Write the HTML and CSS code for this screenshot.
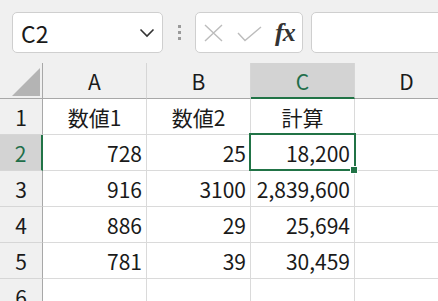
FILE: index.html
```html
<!DOCTYPE html>
<html lang="ja">

<head>
    <meta charset="UTF-8">
    <meta name="viewport" content="width=device-width, initial-scale=1.0">
    <title>計算</title>
    <link rel="stylesheet" href="styles.css">
</head>

<body>
    <div class="toolbar">
        <div class="name-box">
            <span>C2</span>
            <svg class="chevron" width="16" height="10" viewBox="0 0 16 10">
                <polyline points="1.5,1.5 8,8 14.5,1.5" fill="none" stroke="#333" stroke-width="1.6" />
            </svg>
        </div>
        <div class="grip">
            <span></span><span></span><span></span>
        </div>
        <div class="fx-box">
            <svg class="icon-cancel" width="19" height="18" viewBox="0 0 19 18">
                <path d="M1 1 L18 17 M18 1 L1 17" stroke="#bcbcbc" stroke-width="1.4" fill="none" />
            </svg>
            <svg class="icon-enter" width="25" height="16" viewBox="0 0 25 16">
                <polyline points="1,7 8,14.5 24,1" fill="none" stroke="#bcbcbc" stroke-width="1.4" />
            </svg>
            <span class="fx">fx</span>
        </div>
        <div class="formula"></div>
    </div>

    <div class="sheet">
        <!-- header row -->
        <div class="corner"><span class="triangle"></span></div>
        <div class="col-head">A</div>
        <div class="col-head">B</div>
        <div class="col-head active">C</div>
        <div class="col-head">D</div>

        <div class="row-head">1</div>
        <div class="cell center">数値1</div>
        <div class="cell center">数値2</div>
        <div class="cell center">計算</div>
        <div class="cell"></div>

        <div class="row-head active">2</div>
        <div class="cell">728</div>
        <div class="cell">25</div>
        <div class="cell selected">18,200</div>
        <div class="cell"></div>

        <div class="row-head">3</div>
        <div class="cell">916</div>
        <div class="cell">3100</div>
        <div class="cell">2,839,600</div>
        <div class="cell"></div>

        <div class="row-head">4</div>
        <div class="cell">886</div>
        <div class="cell">29</div>
        <div class="cell">25,694</div>
        <div class="cell"></div>

        <div class="row-head">5</div>
        <div class="cell">781</div>
        <div class="cell">39</div>
        <div class="cell">30,459</div>
        <div class="cell"></div>

        <div class="row-head">6</div>
        <div class="cell"></div>
        <div class="cell"></div>
        <div class="cell"></div>
        <div class="cell"></div>
    </div>
</body>

</html>
```

FILE: styles.css
```css
body {
    margin: 0;
    background-color: #f0f0f0;
    font-family: "Noto Sans CJK JP", "Noto Sans", sans-serif;
    color: #1a1a1a;
    overflow: hidden;
    height: 301px;
}

/* formula bar */
.toolbar {
    display: flex;
    align-items: flex-start;
    height: 63px;
    padding: 12px 0 0 12px;
    box-sizing: border-box;
    overflow: hidden;
}

.name-box,
.fx-box,
.formula {
    flex: none;
    height: 41px;
    box-sizing: border-box;
    background-color: white;
    border: 1px solid #cfcfcf;
    border-radius: 5px;
}

.name-box {
    width: 151px;
    display: flex;
    align-items: center;
    justify-content: space-between;
    padding: 0 7px 0 8px;
    font-size: 23px;
}

.name-box span {
    line-height: 1;
    margin-top: 2px;
}

.grip {
    flex: none;
    width: 32px;
    height: 41px;
    display: flex;
    flex-direction: column;
    align-items: center;
    justify-content: center;
    gap: 3px;
}

.grip span {
    width: 3px;
    height: 3px;
    background-color: #9a9a9a;
}

.fx-box {
    width: 108px;
    display: flex;
    align-items: center;
    padding-left: 8px;
}

.icon-cancel {
    margin-top: 1px;
}

.icon-enter {
    margin-left: 14px;
    margin-top: 3px;
}

.fx {
    margin-left: 13px;
    font-family: "Liberation Serif", serif;
    font-style: italic;
    font-weight: bold;
    font-size: 26px;
    color: #333;
    letter-spacing: -1px;
    line-height: 1;
}

.formula {
    width: 200px;
    margin-left: 8px;
}

/* grid */
.sheet {
    display: grid;
    grid-template-columns: 43px repeat(4, 104px);
    grid-template-rows: 36px repeat(6, 36px);
    width: 459px;
    background-color: white;
}

.corner,
.col-head,
.row-head {
    background-color: #f0f0f0;
    display: flex;
    align-items: center;
    justify-content: center;
    font-size: 21px;
    box-sizing: border-box;
}

.corner {
    border-right: 1px solid #a8a8a8;
    border-bottom: 1px solid #a8a8a8;
    position: relative;
}

.triangle {
    position: absolute;
    right: 2px;
    bottom: 2px;
    width: 0;
    height: 0;
    border-left: 28px solid transparent;
    border-bottom: 28px solid #b4b4b4;
}

.col-head {
    border-right: 1px solid #d6d6d6;
    border-bottom: 1px solid #a8a8a8;
    padding-top: 1px;
}

.col-head.active {
    background-color: #d3d3d3;
    color: #1f6e4a;
    border-bottom: 2px solid #217346;
}

.row-head {
    border-right: 1px solid #a8a8a8;
    border-bottom: 1px solid #d6d6d6;
}

.row-head.active {
    background-color: #d3d3d3;
    color: #1f6e4a;
    border-right: 2px solid #217346;
}

.cell {
    border-right: 1px solid #dadada;
    border-bottom: 1px solid #dadada;
    box-sizing: border-box;
    display: flex;
    align-items: center;
    justify-content: flex-end;
    padding-right: 4px;
    font-size: 21px;
    white-space: nowrap;
}

.cell.center {
    justify-content: center;
    padding-right: 0;
}

.cell.selected {
    position: relative;
}

.cell.selected::after {
    content: "";
    position: absolute;
    top: -2px;
    left: -2px;
    right: -2px;
    bottom: -1px;
    border: 2px solid #217346;
}

.cell.selected::before {
    content: "";
    position: absolute;
    right: -4px;
    bottom: -4px;
    width: 6px;
    height: 6px;
    background-color: #217346;
    border: 1px solid white;
    z-index: 1;
}
```
